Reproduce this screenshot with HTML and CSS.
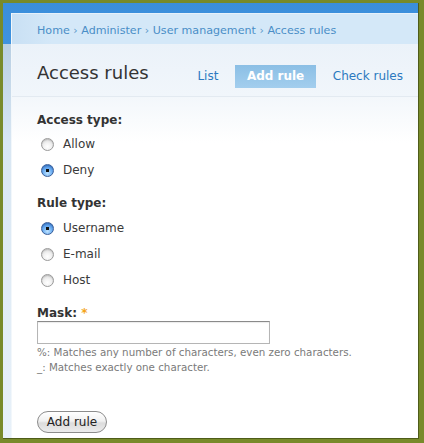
FILE: index.html
```html
<!DOCTYPE html>
<html lang="en">
<head>
<meta charset="utf-8">
<title>Access rules</title>
<link rel="stylesheet" href="styles.css">
</head>
<body>
<div class="frame">
  <div class="panel">
    <div class="breadcrumb">
      <a href="#">Home</a> › <a href="#">Administer</a> › <a href="#">User management</a> › <a href="#">Access rules</a>
    </div>
    <div class="header">
      <h1 class="title">Access rules</h1>
      <ul class="tabs">
        <li><a href="#" class="tab">List</a></li>
        <li><a href="#" class="tab active">Add rule</a></li>
        <li><a href="#" class="tab">Check rules</a></li>
      </ul>
    </div>
    <form class="form">
      <div class="group">
        <div class="field-label">Access type:</div>
        <label class="radio-row"><input type="radio" name="status" class="radio"><span>Allow</span></label>
        <label class="radio-row"><input type="radio" name="status" class="radio" checked><span>Deny</span></label>
      </div>
      <div class="group group-rule">
        <div class="field-label">Rule type:</div>
        <label class="radio-row"><input type="radio" name="type" class="radio" checked><span>Username</span></label>
        <label class="radio-row"><input type="radio" name="type" class="radio"><span>E-mail</span></label>
        <label class="radio-row"><input type="radio" name="type" class="radio"><span>Host</span></label>
      </div>
      <div class="group group-mask">
        <div class="field-label">Mask: <span class="required">*</span></div>
        <input type="text" class="text-input">
        <div class="description">%: Matches any number of characters, even zero characters.<br>_: Matches exactly one character.</div>
      </div>
      <button type="button" class="submit">Add rule</button>
    </form>
  </div>
</div>
</body>
</html>
```

FILE: styles.css
```css
html, body {
  margin: 0;
  padding: 0;
}
body {
  background: #788a2a;
  font-family: "DejaVu Sans", Verdana, sans-serif;
  color: #3a3a3a;
  width: 424px;
  height: 443px;
  overflow: hidden;
}
.frame {
  box-sizing: border-box;
  margin: 3px 0 0 3px;
  width: 416px;
  height: 436px;
  border-right: 1px solid #4f5c19;
  border-bottom: 1px solid #4f5c19;
  padding: 10px 0 0 8px;
  background: linear-gradient(to bottom, #3b8edb 0, #3f93df 41px, #b9cfe3 41px, #d9e7f3 140px, #e8f1f9 100%);
  display: flex;
}
.panel {
  flex: 1;
  display: flex;
  flex-direction: column;
  background: linear-gradient(to bottom, #ffffff 0, #ffffff 84px, #f3f7fb 84px, #ffffff 130px, #ffffff 100%);
  border-left: 1px solid #f2f7fb;
}
.breadcrumb {
  height: 31px;
  box-sizing: border-box;
  padding: 9px 0 0 25px;
  font-size: 11.1px;
  line-height: 16px;
  color: #5d9acb;
  background: linear-gradient(to right, #c9e0f4 0, #d4e8f8 40px, #d4e8f8 100%);
  border-top: 1px solid #e6f1fb;
}
.breadcrumb a {
  color: #4a8ec7;
  text-decoration: none;
}
.header {
  height: 53px;
  box-sizing: border-box;
  border-bottom: 1px solid #e3eaf1;
  background: linear-gradient(to bottom, #ebf2f9 0, #f1f6fb 100%);
  display: flex;
  align-items: center;
  padding: 0 15px 0 25px;
}
.title {
  margin: 0;
  font-size: 18px;
  font-weight: normal;
  color: #333;
  line-height: 24px;
  flex: 1;
  position: relative;
  top: 3px;
}
.tabs {
  list-style: none;
  margin: 0;
  padding: 0;
  display: flex;
  align-items: center;
  gap: 17px;
  position: relative;
  top: 6px;
}
.tab {
  display: block;
  font-size: 12px;
  line-height: 23px;
  color: #2b79c0;
  text-decoration: none;
}
.tab.active {
  color: #fff;
  font-weight: bold;
  padding: 0 11.5px;
  background: linear-gradient(to bottom, #8bbfe5 0, #a3ceee 100%);
}
.form {
  padding: 15px 25px 0;
  font-size: 12px;
}
.field-label {
  font-weight: bold;
  line-height: 16px;
  color: #333;
  margin-bottom: 3px;
}
.required {
  color: #f4a41a;
}
.radio-row {
  display: flex;
  align-items: center;
  height: 26px;
  padding-left: 4px;
  color: #3a3a3a;
}
.group-rule {
  margin-top: 12px;
}
.group-rule .field-label {
  margin-bottom: 4px;
}
.group-mask {
  margin-top: 12px;
}
.group-mask .field-label {
  margin-bottom: 0;
}
.radio {
  appearance: none;
  -webkit-appearance: none;
  margin: 0 9px 0 0;
  width: 13px;
  height: 13px;
  border-radius: 50%;
  box-sizing: border-box;
  border: 1px solid #9a9a9a;
  background: radial-gradient(circle at 50% 70%, #ffffff 0, #f2f2f2 40%, #cfcfcf 100%);
  box-shadow: inset 0 1px 1px rgba(0,0,0,0.15);
  flex: none;
}
.radio:checked {
  border-color: #3b5f9a;
  background: radial-gradient(circle at 50% 50%, #111 0, #111 1.5px, transparent 2px),
              radial-gradient(circle at 50% 75%, #bfe3ff 0, #6fb0f2 45%, #2a6fcf 100%);
}
.text-input {
  display: block;
  box-sizing: border-box;
  width: 233px;
  height: 23px;
  margin: 0;
  border: 1px solid #b5b5b5;
  border-top-color: #8a8a8a;
  background: #fff;
  box-shadow: inset 0 1px 1px rgba(0,0,0,0.08);
}
.description {
  margin-top: 1px;
  font-size: 10.3px;
  line-height: 15px;
  color: #7a7a7a;
}
.submit {
  margin-top: 36px;
  display: block;
  box-sizing: border-box;
  width: 70px;
  height: 22px;
  padding: 0;
  border: 1px solid #8c8c8c;
  border-radius: 11px;
  background: linear-gradient(to bottom, #ffffff 0, #f1f1f1 45%, #dcdcdc 55%, #ececec 100%);
  font-family: "DejaVu Sans", Verdana, sans-serif;
  font-size: 12px;
  color: #222;
}
```
